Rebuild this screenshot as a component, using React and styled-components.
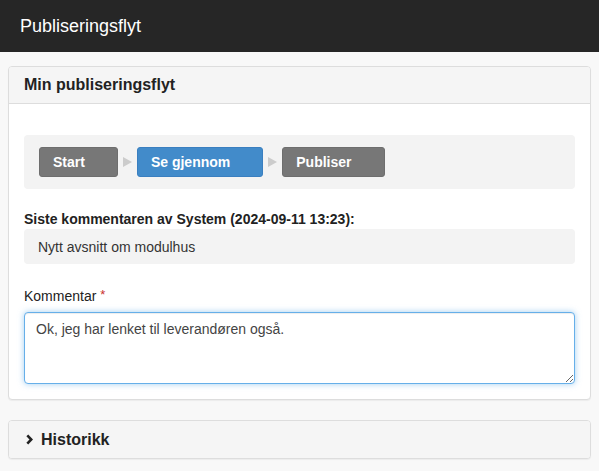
import React from "react";
import styled, { createGlobalStyle } from "styled-components";

const Global = createGlobalStyle`
  html, body { margin: 0; padding: 0; }
  body {
    background: #f8f8f8;
    font-family: "Liberation Sans", Arial, Helvetica, sans-serif;
    color: #333;
    font-size: 14px;
  }
  * { box-sizing: border-box; }
`;

const TopBar = styled.header`
  height: 52px;
  background: #262626;
  color: #fff;
  display: flex;
  align-items: center;
  padding-left: 20px;
  font-size: 18px;
`;

const Main = styled.main`
  padding: 14px 8px;
  display: flex;
  flex-direction: column;
  gap: 20px;
`;

const Panel = styled.section`
  background: #fff;
  border: 1px solid #ddd;
  border-radius: 4px;
  box-shadow: 0 1px 1px rgba(0, 0, 0, 0.05);
  overflow: hidden;
`;

const PanelHeading = styled.div`
  background: #f5f5f5;
  border-bottom: ${(p) => (p.$collapsed ? "none" : "1px solid #ddd")};
  padding: 0 15px 0 ${(p) => (p.$collapsed ? "17px" : "15px")};
  height: 37px;
  display: flex;
  align-items: center;
  gap: 8px;
  font-size: 16px;
  font-weight: bold;
  color: #222;
`;

const PanelBody = styled.div`
  padding: 31px 15px 15px;
`;

const Steps = styled.div`
  background: #f3f3f3;
  border-radius: 4px;
  padding: 12px 15px;
  display: flex;
  align-items: center;
`;

const Step = styled.div`
  height: 30px;
  display: flex;
  align-items: center;
  padding: 0 32px 0 13px;
  border-radius: 3px;
  color: #fff;
  font-weight: bold;
  font-size: 14px;
  background: ${(p) => (p.$active ? "#428bca" : "#777")};
  border: 1px solid ${(p) => (p.$active ? "#3a7fc0" : "#6e6e6e")};
`;

const Arrow = styled.span`
  width: 19px;
  display: flex;
  justify-content: center;
  &::before {
    content: "";
    border-left: 9px solid #ccc;
    border-top: 5px solid transparent;
    border-bottom: 5px solid transparent;
  }
`;

const Label = styled.div`
  font-weight: ${(p) => (p.$bold ? "bold" : "normal")};
  font-size: 14px;
  color: #222;
  margin: ${(p) => p.$margin};
`;

const Required = styled.span`
  color: #c9302c;
  font-size: 13px;
  vertical-align: top;
  margin-left: 4px;
  line-height: 1;
`;

const CommentBox = styled.div`
  background: #f3f3f3;
  border-radius: 4px;
  padding: 0 14px;
  height: 35px;
  display: flex;
  align-items: center;
  color: #333;
`;

const TextArea = styled.textarea`
  display: block;
  width: 100%;
  height: 72px;
  border: 1px solid #66afe9;
  border-radius: 4px;
  box-shadow: inset 0 1px 1px rgba(0, 0, 0, 0.075), 0 0 6px rgba(102, 175, 233, 0.6);
  padding: 6px 11px;
  font-family: inherit;
  font-size: 14px;
  line-height: 20px;
  color: #444;
  outline: none;
  resize: vertical;
`;

const Chevron = () => (
  <svg width="7" height="11" viewBox="0 0 7 11">
    <path d="M1.3 1.4 L5.3 5.5 L1.3 9.6" fill="none" stroke="#222" strokeWidth="2.6" />
  </svg>
);

export default function App() {
  return (
    <>
      <Global />
      <TopBar>Publiseringsflyt</TopBar>
      <Main>
        <Panel>
          <PanelHeading>Min publiseringsflyt</PanelHeading>
          <PanelBody>
            <Steps>
              <Step>Start</Step>
              <Arrow />
              <Step $active>Se gjennom</Step>
              <Arrow />
              <Step>Publiser</Step>
            </Steps>
            <Label $bold $margin="22px 0 2px">
              Siste kommentaren av System (2024-09-11 13:23):
            </Label>
            <CommentBox>Nytt avsnitt om modulhus</CommentBox>
            <Label $margin="24px 0 8px">
              Kommentar<Required>*</Required>
            </Label>
            <TextArea defaultValue="Ok, jeg har lenket til leverandøren også." />
          </PanelBody>
        </Panel>
        <Panel>
          <PanelHeading $collapsed>
            <Chevron />
            Historikk
          </PanelHeading>
        </Panel>
      </Main>
    </>
  );
}
